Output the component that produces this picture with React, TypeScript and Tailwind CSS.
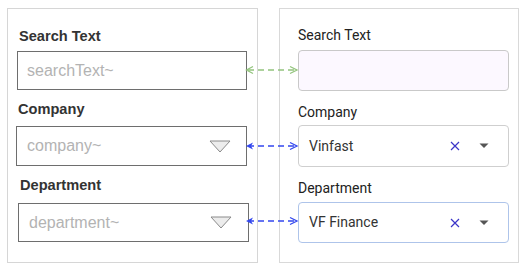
import React from "react";

function Arrow({ top, color, filledLeft }: { top: number; color: string; filledLeft?: boolean }) {
  return (
    <svg
      className="absolute"
      style={{ left: 244, top: top - 6 }}
      width={56}
      height={12}
      viewBox="0 0 56 12"
    >
      <line x1={4} y1={6} x2={52} y2={6} stroke={color} strokeWidth={1.3} strokeDasharray="6 4" />
      {filledLeft ? (
        <path d="M2 6 L9 2.5 L7 6 L9 9.5 Z" fill={color} />
      ) : (
        <path d="M9 2.5 L2.5 6 L9 9.5" fill="none" stroke={color} strokeWidth={1.3} />
      )}
      <path d="M46 2.5 L53 6 L46 9.5" fill="none" stroke={color} strokeWidth={1.3} />
    </svg>
  );
}

function OutlineTri() {
  return (
    <svg width={22} height={13} viewBox="0 0 22 13">
      <path d="M1 1 L21 1 L11 12 Z" fill="#ececec" stroke="#8a8a8a" strokeWidth={1} strokeLinejoin="round" />
    </svg>
  );
}

function XIcon() {
  return (
    <svg width={10} height={10} viewBox="0 0 10 10">
      <path d="M1 1 L9 9 M9 1 L1 9" stroke="#3b35c8" strokeWidth={1.2} />
    </svg>
  );
}

function DownTri() {
  return (
    <svg width={10} height={6} viewBox="0 0 10 6">
      <path d="M0.5 0.5 L9.5 0.5 L5 5 Z" fill="#555" />
    </svg>
  );
}

export default function App() {
  const arial = { fontFamily: '"Liberation Sans", Arial, sans-serif' };
  const roboto = { fontFamily: 'Roboto, "Liberation Sans", sans-serif' };
  return (
    <div className="relative w-[526px] h-[270px] bg-white overflow-hidden">
      <div className="flex pt-[8px]">
        {/* Left panel */}
        <div
          className="ml-[7px] w-[251px] h-[255px] border border-[#d6d6d6] flex flex-col"
          style={arial}
        >
          <div className="mt-[19px] ml-[11px] text-[14.6px] leading-[16px] font-bold text-[#333]">Search Text</div>
          <div className="mt-[7px] ml-[9px] w-[230px] h-[39px] border border-[#6e6e6e] flex items-center pl-[9px] text-[16px] text-[#b3b3b3]">
            searchText~
          </div>
          <div className="mt-[11px] ml-[10px] text-[14.6px] leading-[16px] font-bold text-[#333]">Company</div>
          <div className="mt-[9px] ml-[8px] w-[231px] h-[40px] border border-[#6e6e6e] flex items-center justify-between pl-[10px] pr-[15px] text-[16px] text-[#b3b3b3]">
            <span>company~</span>
            <OutlineTri />
          </div>
          <div className="mt-[11px] ml-[12px] text-[14.6px] leading-[16px] font-bold text-[#333]">Department</div>
          <div className="mt-[10px] ml-[10px] w-[231px] h-[39px] border border-[#6e6e6e] flex items-center justify-between pl-[10px] pr-[16px] text-[16px] text-[#b3b3b3]">
            <span>department~</span>
            <OutlineTri />
          </div>
        </div>

        {/* Right panel */}
        <div
          className="ml-[21px] w-[240px] h-[255px] border border-[#d9d9d9] flex flex-col"
          style={roboto}
        >
          <div className="mt-[18px] ml-[18px] text-[14px] leading-[16px] text-[#222]">Search Text</div>
          <div className="mt-[7px] ml-[18px] w-[211px] h-[41px] rounded-[4px] border border-[#c9c9c9] bg-[#fcf8ff]" />
          <div className="mt-[13px] ml-[18px] text-[14px] leading-[16px] text-[#222]">Company</div>
          <div className="mt-[5px] ml-[18px] w-[211px] h-[42px] rounded-[4px] border border-[#cfcfcf] flex items-center pl-[10px] text-[14px] text-[#333]">
            <span className="flex-1">Vinfast</span>
            <span className="mr-[19px] flex items-center"><XIcon /></span>
            <span className="mr-[19px] flex items-center"><DownTri /></span>
          </div>
          <div className="mt-[13px] ml-[18px] text-[14px] leading-[16px] text-[#222]">Department</div>
          <div className="mt-[6px] ml-[18px] w-[211px] h-[41px] rounded-[4px] border border-[#aec4ea] flex items-center pl-[10px] text-[14px] text-[#333]">
            <span className="flex-1">VF Finance</span>
            <span className="mr-[19px] flex items-center"><XIcon /></span>
            <span className="mr-[19px] flex items-center"><DownTri /></span>
          </div>
        </div>
      </div>

      <Arrow top={70} color="#93c47d" />
      <Arrow top={146} color="#3347ee" filledLeft />
      <Arrow top={221} color="#3347ee" filledLeft />
    </div>
  );
}
